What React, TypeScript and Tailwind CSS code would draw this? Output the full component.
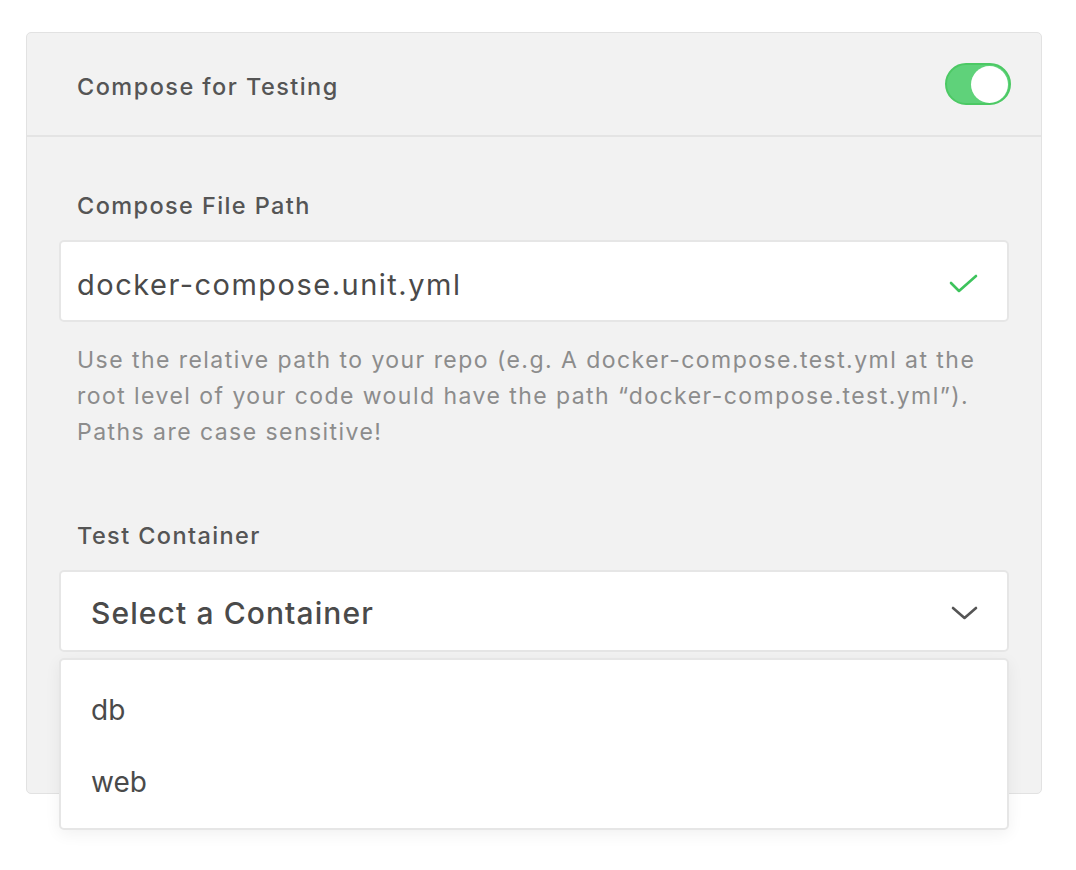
const font = { fontFamily: "Inter, 'Noto Sans', sans-serif" };

function Toggle() {
  return (
    <div className="flex h-[42px] w-[66px] items-center justify-end rounded-full border-2 border-[#4cc964] bg-[#5fd27a] p-[1px]">
      <div className="h-[37px] w-[37px] rounded-full bg-white" />
    </div>
  );
}

function Check() {
  return (
    <svg className="mt-[5px]" width="30" height="22" viewBox="0 0 30 22" fill="none">
      <polyline
        points="2,10 10,18 27,3"
        stroke="#3dc35c"
        strokeWidth="2.6"
        strokeLinecap="round"
        strokeLinejoin="round"
      />
    </svg>
  );
}

function Chevron() {
  return (
    <svg className="mt-[6px]" width="28" height="16" viewBox="0 0 28 16" fill="none">
      <polyline
        points="2,2 13.5,12 25,2"
        stroke="#555"
        strokeWidth="2.6"
        strokeLinecap="round"
        strokeLinejoin="round"
      />
    </svg>
  );
}

export default function App() {
  return (
    <div className="min-h-[870px] bg-white pt-[32px] pl-[26px]" style={font}>
      <div className="w-[1016px] rounded-[5px] border border-[#e2e2e2] bg-[#f2f2f2]">
        <div className="flex h-[104px] items-center justify-between border-b-2 border-[#e4e4e4] pl-[50px] pr-[30px]">
          <span className="pt-[6px] text-[23.5px] font-medium tracking-[1.45px] text-[#555]">Compose for Testing</span>
          <Toggle />
        </div>

        <div className="px-[32px] pt-[54px] pb-[141px]">
          <label className="block pl-[18px] text-[23.5px] leading-[30px] font-medium tracking-[1.4px] text-[#555]">Compose File Path</label>
          <div className="mt-[19px] flex h-[82px] items-center justify-between rounded-[5px] border-2 border-[#e6e6e6] bg-white pl-[16px] pr-[28px]">
            <span className="pt-[7px] text-[29px] tracking-[1.5px] text-[#4a4a4a]">docker-compose.unit.yml</span>
            <Check />
          </div>
          <p className="mt-[20px] pl-[18px] pr-[20px] text-[23px] leading-[36px] tracking-[1.45px] text-[#8c8c8c]">
            Use the relative path to your repo (e.g. A docker-compose.test.yml at the root level of your code would have the path “docker-compose.test.yml”). Paths are case sensitive!
          </p>

          <label className="mt-[71px] block pl-[18px] text-[23.5px] leading-[30px] font-medium tracking-[1.4px] text-[#555]">Test Container</label>
          <div className="relative mt-[19px]">
            <div className="flex h-[82px] items-center justify-between rounded-[5px] border-2 border-[#e6e6e6] bg-white pl-[30px] pr-[28px]">
              <span className="pt-[4px] text-[30px] font-medium tracking-[1.1px] text-[#4a4a4a]">Select a Container</span>
              <Chevron />
            </div>
            <div className="absolute left-0 right-0 top-[88px] rounded-[5px] border-2 border-[#e6e6e6] bg-white pt-[14px] pb-[10px] shadow-[0_4px_16px_rgba(0,0,0,0.06)]">
              <div className="flex h-[72px] items-center pl-[30px] text-[28px] text-[#4a4a4a]">db</div>
              <div className="flex h-[72px] items-center pl-[30px] text-[28px] text-[#4a4a4a]">web</div>
            </div>
          </div>
        </div>
      </div>
    </div>
  );
}
